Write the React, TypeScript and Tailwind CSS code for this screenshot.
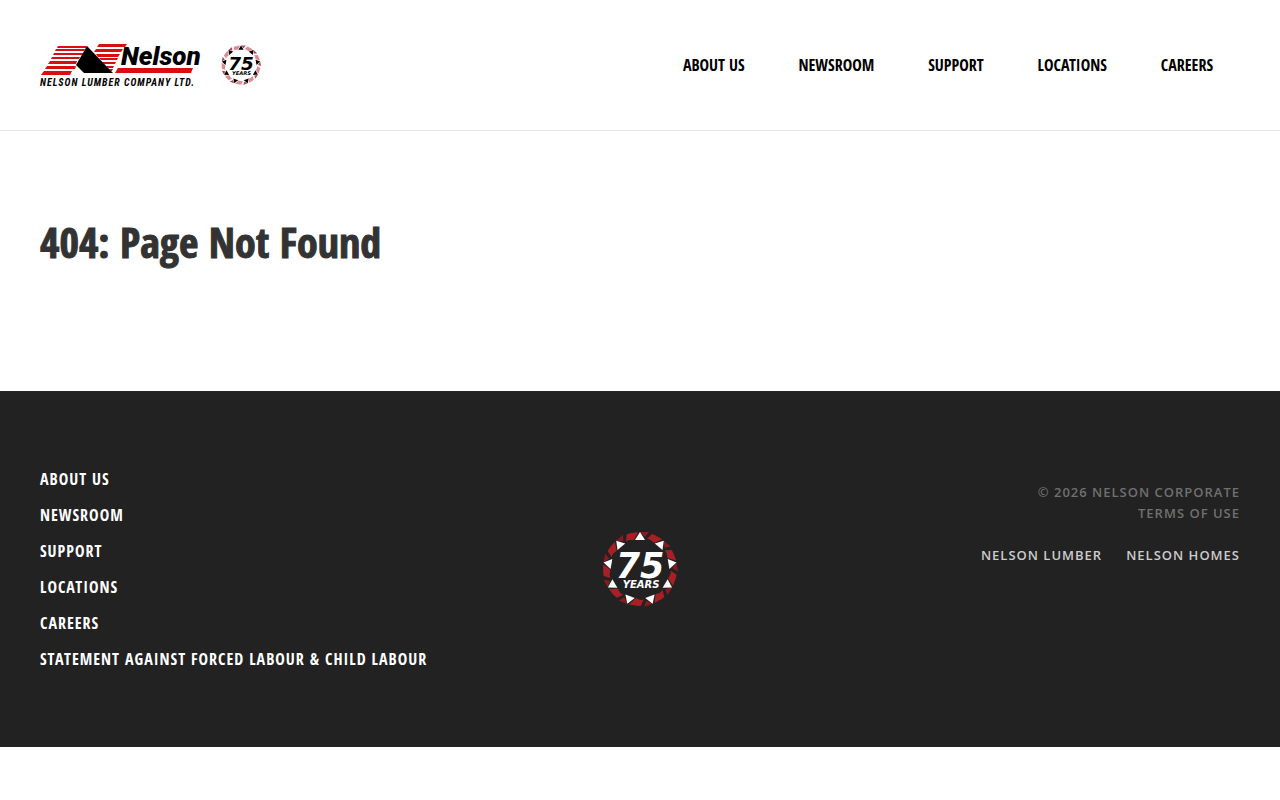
const links = [
  { label: 'About Us', href: '#about' },
  { label: 'Newsroom', href: '#newsroom' },
  { label: 'Support', href: '#support' },
  { label: 'Locations', href: '#locations' },
  { label: 'Careers', href: '#careers' },
];

const footerLinks = [
  ...links,
  { label: 'Statement Against Forced Labour & Child Labour', href: '#statement' },
];

const segments = [0, 40, 80, 120, 160, 200, 240, 280, 320];

type BadgeProps = {
  className: string;
  ink: string;
  red: string;
  darkRed: string;
};

function AnniversaryBadge({ className, ink, red, darkRed }: BadgeProps) {
  return (
    <svg viewBox="0 0 76 76" className={className} role="img" aria-label="75 Years">
      {segments.map((angle) => (
        <g key={angle} transform={`rotate(${angle} 38 38)`}>
          <path d="M30 2 L36 1 L32 9 L26 9 Z" fill={red} />
          <path d="M38 1 L47 1 L43 6 Z" fill={darkRed} />
          <path d="M45 8 L50 3 L55 5 L51 9 Z" fill={red} />
          <path d="M38 1 L43 9 L33 9 Z" fill={ink} />
        </g>
      ))}
      <text
        x="38"
        y="47"
        textAnchor="middle"
        fill={ink}
        className='font-["DejaVu_Sans",sans-serif] text-[35px] font-bold italic'
      >
        75
      </text>
      <text
        x="39"
        y="57"
        textAnchor="middle"
        fill={ink}
        className='font-["DejaVu_Sans",sans-serif] text-[10px] font-bold italic'
      >
        YEARS
      </text>
    </svg>
  );
}

function Logo() {
  return (
    <svg viewBox="0 -7 160 56" className="h-14 w-40 overflow-visible" role="img" aria-label="Nelson Lumber Company Ltd.">
      {/* Left roof stripes */}
      <g fill="#d80e12">
        <path d="M18 2 H47 L46 4 H17 Z" />
        <path d="M16 5 H45 L44 7 H15 Z" />
        <path d="M14 9 H43 L42 11 H13 Z" />
        <path d="M12 13 H40 L39 15 H11 Z" />
        <path d="M10 17 H37 L36 20 H8 Z" />
        <path d="M7 22 H36 L35 25 H5 Z" />
        <path d="M4 27 H32 L30 31 H1 Z" />
      </g>
      {/* Right stripes */}
      <g fill="#d80e12">
        <path d="M59 0 H87 L85 3 H57 Z" />
        <path d="M56 5 H83 L81 8 H54 Z" />
        <path d="M56 10 H80 L78 13 H58 Z" />
        <path d="M59 14 H78 L77 16 H61 Z" />
        <path d="M62 18 H76 L75 20 H64 Z" />
        <path d="M66 22 H74 L73 24 H68 Z" />
        <path d="M69 25 H73 L72 27 H71 Z" />
        <path d="M78 24 H153 L151 29 H75 Z" />
      </g>
      <path d="M47 2 L73 29 H44 L36 21 Z" fill="#000" />
      <text
        x="81"
        y="21"
        className='fill-black font-["Roboto","Liberation_Sans",sans-serif] text-[26px] font-black italic'
      >
        Nelson
      </text>
      <text
        x="0"
        y="42"
        className='fill-black font-["Roboto_Condensed","Liberation_Sans",sans-serif] text-[10px] font-bold italic tracking-[1px]'
      >
        NELSON LUMBER COMPANY LTD.
      </text>
    </svg>
  );
}

function Header() {
  return (
    <header className="flex h-[131px] items-center justify-between border-b border-[#e5e5e5] px-10">
      <a href="#home" className="flex items-center gap-[21px]">
        <Logo />
        <AnniversaryBadge className="size-10" ink="#000000" red="#dc8a92" darkRed="#b8404c" />
      </a>
      <nav className="flex">
        {links.map((link) => (
          <a
            key={link.label}
            href={link.href}
            className='px-[27px] font-["Open_Sans_Condensed","Open_Sans",sans-serif] text-[16px] font-bold uppercase text-black'
          >
            {link.label}
          </a>
        ))}
      </nav>
    </header>
  );
}

function Footer() {
  return (
    <footer className="grid grid-cols-[1fr_auto_1fr] bg-[#222222] px-10 py-[70px]">
      <ul className='font-["Open_Sans_Condensed","Open_Sans",sans-serif] text-[16px] leading-9 font-bold tracking-[1px] text-white uppercase'>
        {footerLinks.map((link) => (
          <li key={link.label}>
            <a href={link.href}>{link.label}</a>
          </li>
        ))}
      </ul>
      <AnniversaryBadge className="size-19 self-center" ink="#ffffff" red="#a82026" darkRed="#8a1a20" />
      <div className='pt-[21px] text-right font-["Open_Sans",sans-serif] text-[13px] leading-[21px] font-semibold tracking-[1px] text-[#707070] uppercase'>
        <p>© 2026 Nelson Corporate</p>
        <p>
          <a href="#terms">Terms of Use</a>
        </p>
        <div className="mt-[21px] flex justify-end gap-6 text-[#cccccc]">
          <a href="#lumber">Nelson Lumber</a>
          <a href="#homes">Nelson Homes</a>
        </div>
      </div>
    </footer>
  );
}

export default function App() {
  return (
    <div className="bg-white">
      <Header />
      <main className="px-10 pt-[81px] pb-[119px]">
        <h1 className='font-["Open_Sans_Condensed","Open_Sans",sans-serif] text-[42px] leading-[60px] font-extrabold text-[#333333] [-webkit-text-stroke:1px_#333333]'>
          404: Page Not Found
        </h1>
      </main>
      <Footer />
    </div>
  );
}
